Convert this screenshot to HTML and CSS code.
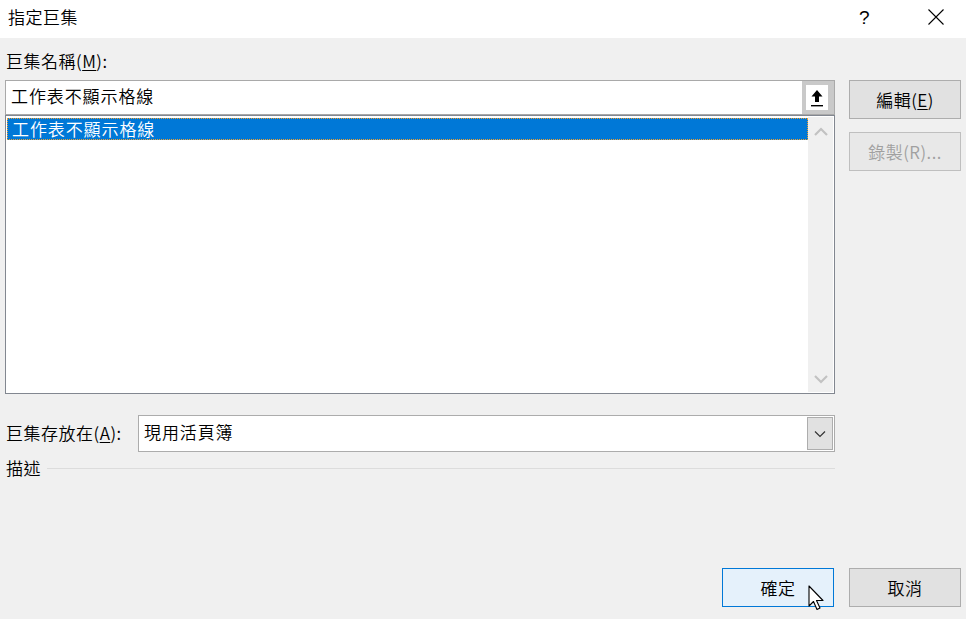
FILE: index.html
```html
<!DOCTYPE html>
<html lang="zh-Hant">
<head>
<meta charset="utf-8">
<title>指定巨集</title>
<link rel="stylesheet" href="styles.css">
</head>
<body>
<div class="dialog">
  <div class="titlebar">
    <span class="title">指定巨集</span>
    <span class="help">?</span>
    <span class="close">
      <svg width="16" height="16" viewBox="0 0 16 16"><path d="M0.5 0.5 L15.5 15.5 M15.5 0.5 L0.5 15.5" stroke="#000" stroke-width="1.1" fill="none"/></svg>
    </span>
  </div>
  <div class="body">
    <div class="label name-label">巨集名稱(<u>M</u>):</div>
    <div class="main-row">
      <div class="left">
        <div class="input">
          <span class="input-text">工作表不顯示格線</span>
          <span class="upbtn">
            <span class="upbtn-inner">
              <svg width="16" height="20" viewBox="0 0 16 20"><path d="M8 2 L13.5 8.5 L10 8.5 L10 14 L6 14 L6 8.5 L2.5 8.5 Z" fill="#000"/><rect x="2" y="17" width="12" height="1.4" fill="#000"/></svg>
            </span>
          </span>
        </div>
        <div class="list">
          <div class="items">
            <div class="item selected">工作表不顯示格線</div>
          </div>
          <div class="scrollbar">
            <svg class="chev" width="14" height="10" viewBox="0 0 14 10"><path d="M1 8 L7 2 L13 8" stroke="#c2c2c2" stroke-width="2.2" fill="none"/></svg>
            <svg class="chev" width="14" height="10" viewBox="0 0 14 10"><path d="M1 2 L7 8 L13 2" stroke="#c2c2c2" stroke-width="2.2" fill="none"/></svg>
          </div>
        </div>
      </div>
      <div class="right">
        <button class="btn">編輯(<u>E</u>)</button>
        <button class="btn disabled">錄製(R)...</button>
      </div>
    </div>
    <div class="store-row">
      <span class="label">巨集存放在(<u>A</u>):</span>
      <div class="combo">
        <span class="combo-text">現用活頁簿</span>
        <span class="dropbtn">
          <svg width="12" height="8" viewBox="0 0 12 8"><path d="M1 1.5 L6 6.5 L11 1.5" stroke="#333" stroke-width="1.2" fill="none"/></svg>
        </span>
      </div>
    </div>
    <div class="desc-row">
      <span class="label">描述</span>
      <span class="sep"></span>
    </div>
    <div class="spacer"></div>
    <div class="footer">
      <button class="btn primary">確定</button>
      <button class="btn">取消</button>
    </div>
    <svg class="cursor" width="20" height="28" viewBox="0 0 20 28"><path d="M1 1 L1 21 L5.5 16.5 L9 24.5 L12 23 L8.5 15.5 L15 15.5 Z" fill="#fff" stroke="#000" stroke-width="1.1" stroke-linejoin="round"/></svg>
  </div>
</div>
</body>
</html>
```

FILE: styles.css
```css
* { box-sizing: border-box; }
html, body { margin: 0; padding: 0; }
body {
  width: 966px;
  height: 619px;
  overflow: hidden;
  font-family: "Noto Sans CJK TC", "Noto Sans", sans-serif;
  font-size: 17px;
  font-weight: 350;
  color: #000;
  background: #f0f0f0;
}
u { text-decoration: underline; text-underline-offset: 2px; text-decoration-thickness: 1px; }
.dialog { width: 966px; height: 619px; display: flex; flex-direction: column; }
.titlebar {
  height: 38px;
  background: #fff;
  display: flex;
  align-items: center;
  padding-left: 8px;
}
.title { flex: 1; font-size: 17px; letter-spacing: 0.5px; line-height: 20px; margin-top: -4px; }
.help { width: 20px; font-size: 19px; line-height: 22px; margin-right: 48px; margin-top: -3px; font-family: "Liberation Sans", sans-serif; font-weight: 400; text-indent: -1px; }
.close { width: 16px; height: 16px; margin-right: 22px; display: flex; margin-top: -5px; }

.body {
  flex: 1;
  position: relative;
  display: flex;
  flex-direction: column;
  padding: 0 5px 12px 5px;
}
.label { line-height: 20px; letter-spacing: 0.5px; white-space: nowrap; }
.name-label { margin-top: 13px; margin-left: 1px; height: 20px; }
.main-row { display: flex; gap: 14px; margin-top: 9px; }
.left { width: 830px; display: flex; flex-direction: column; }
.right { width: 112px; display: flex; flex-direction: column; gap: 13px; }

.input {
  height: 35px;
  border: 1px solid #a9a9a9;
  background: #fff;
  display: flex;
  align-items: center;
}
.input-text { flex: 1; padding-left: 5px; line-height: 20px; letter-spacing: 0.9px; margin-top: -3px; }
.upbtn {
  width: 32px;
  height: 33px;
  background: #c9c9c9;
  display: flex;
  align-items: center;
  justify-content: center;
  padding-right: 2px;
}
.upbtn-inner {
  width: 22px;
  height: 25px;
  background: #fff;
  display: flex;
  align-items: center;
  justify-content: center;
}

.list {
  height: 279px;
  border: 1px solid #828790;
  background: #fff;
  display: flex;
  padding: 1px;
}
.items { flex: 1; }
.item {
  height: 22px;
  line-height: 20px;
  padding-left: 4px;
  letter-spacing: 0.9px;
}
.item.selected {
  background: #0078d7;
  color: #fff;
  border: 1px dotted #f0a030;
  margin-top: 1px;
}
.scrollbar {
  width: 25px;
  background: #f0f0f0;
  display: flex;
  flex-direction: column;
  justify-content: space-between;
  align-items: center;
  padding: 10px 0 8px;
}

.btn {
  height: 39px;
  width: 112px;
  border: 1px solid #adadad;
  background: #e1e1e1;
  font-family: inherit;
  font-size: 17px;
  font-weight: 350;
  letter-spacing: 0.5px;
  color: #000;
  padding: 0;
  line-height: 20px;
}
.btn.disabled { color: #a0a0a0; border-color: #bfbfbf; background: #e8e8e8; }
.btn.primary { border-color: #0078d7; background: #e5f1fb; }

.store-row {
  display: flex;
  align-items: center;
  margin-top: 21px;
  width: 830px;
}
.store-row .label { width: 132px; margin-left: 1px; margin-top: -2px; }
.combo {
  flex: 1;
  height: 37px;
  border: 1px solid #acacac;
  background: #fff;
  display: flex;
  align-items: center;
  padding-right: 1px;
}
.combo-text { flex: 1; padding-left: 5px; line-height: 20px; letter-spacing: 0.9px; margin-top: -3px; }
.dropbtn {
  width: 26px;
  height: 33px;
  background: #e1e1e1;
  border: 1px solid #adadad;
  display: flex;
  align-items: center;
  justify-content: center;
}

.desc-row { display: flex; align-items: center; width: 830px; margin-top: 6px; gap: 6px; }
.desc-row .label { margin-left: 1px; }
.sep { flex: 1; height: 1px; background: #dcdcdc; margin-top: 1px; }

.spacer { flex: 1; }
.footer { display: flex; justify-content: flex-end; gap: 15px; }

.cursor { position: absolute; left: 808px; top: 547px; }
```
